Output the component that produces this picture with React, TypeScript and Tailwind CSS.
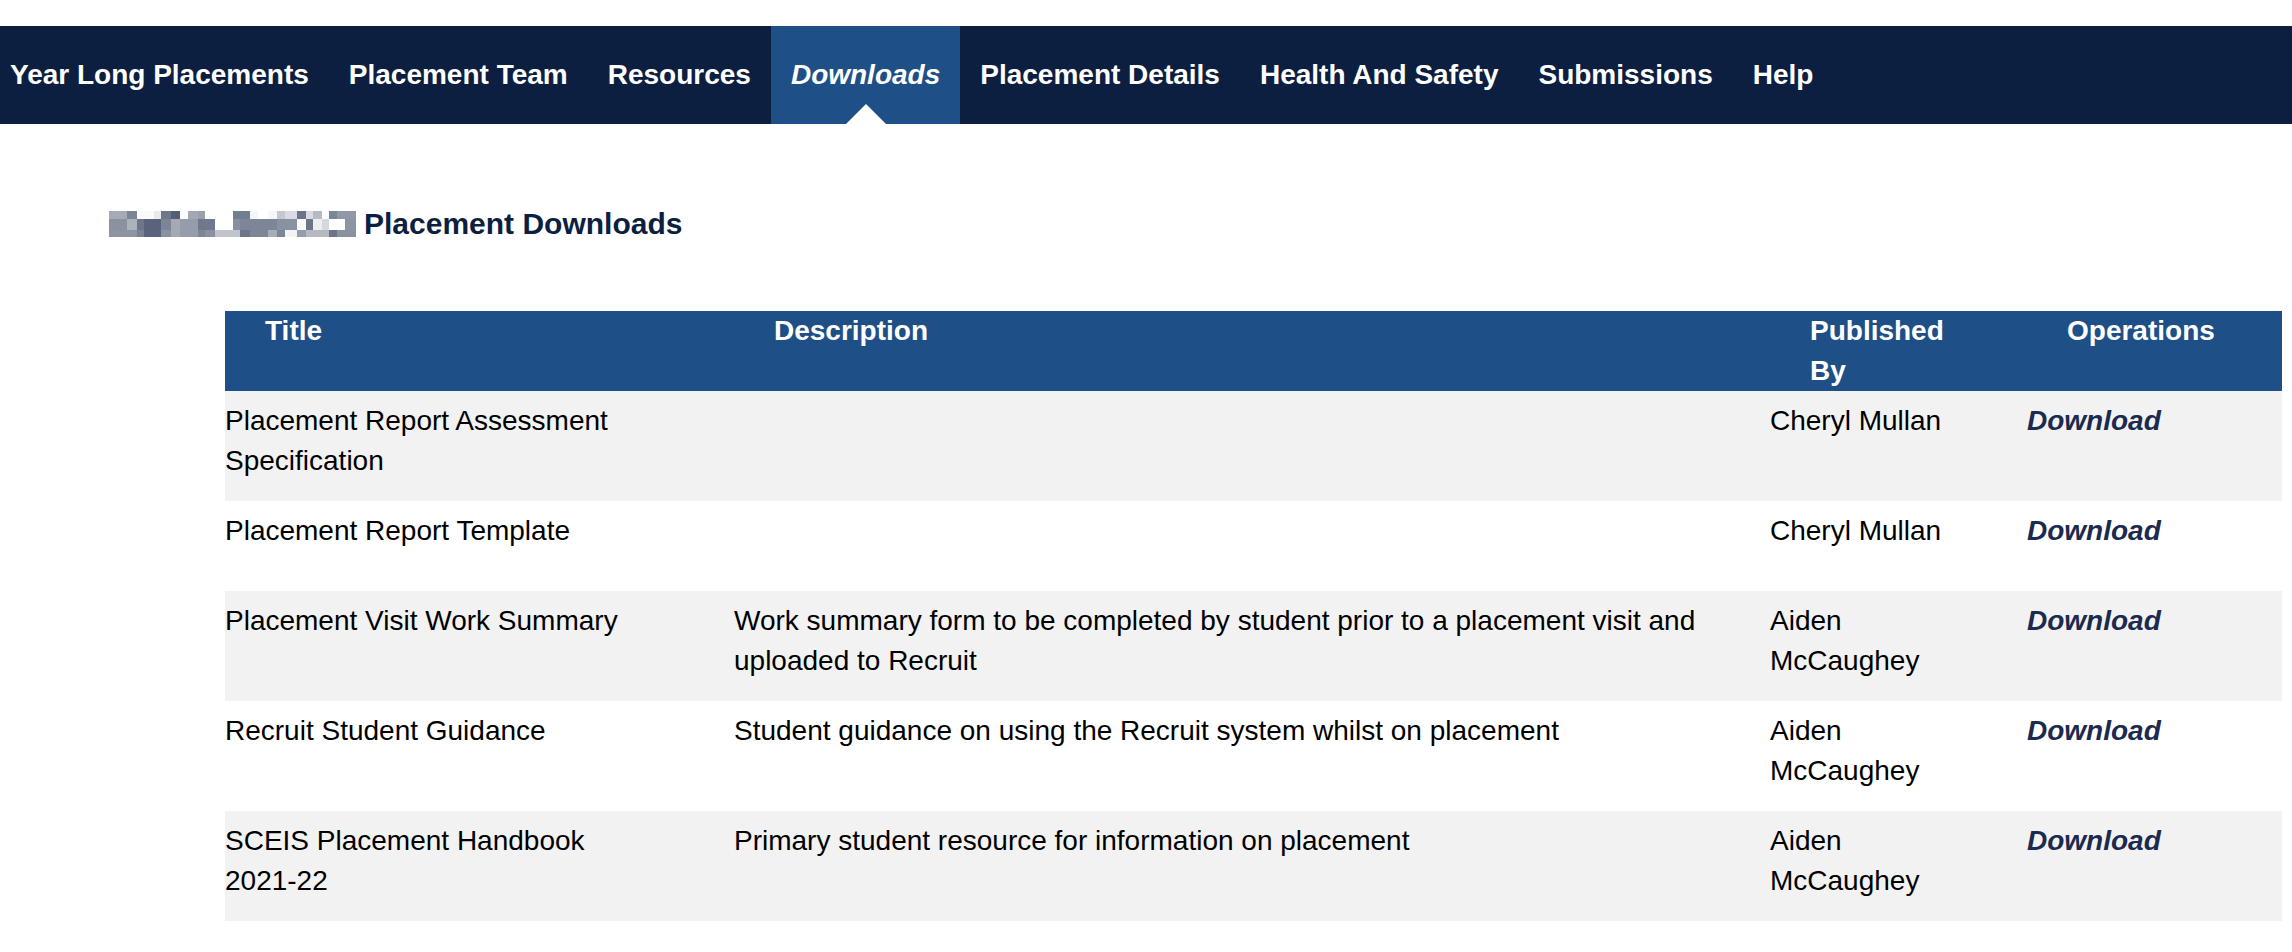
import React from 'react';

type Row = {
  title: string;
  description: string;
  publishedBy: string;
};

const NAV_ITEMS = [
  'Year Long Placements',
  'Placement Team',
  'Resources',
  'Downloads',
  'Placement Details',
  'Health And Safety',
  'Submissions',
  'Help',
];

const ROWS: Row[] = [
  { title: 'Placement Report Assessment Specification', description: '', publishedBy: 'Cheryl Mullan' },
  { title: 'Placement Report Template', description: '', publishedBy: 'Cheryl Mullan' },
  {
    title: 'Placement Visit Work Summary',
    description: 'Work summary form to be completed by student prior to a placement visit and uploaded to Recruit',
    publishedBy: 'Aiden McCaughey',
  },
  {
    title: 'Recruit Student Guidance',
    description: 'Student guidance on using the Recruit system whilst on placement',
    publishedBy: 'Aiden McCaughey',
  },
  {
    title: 'SCEIS Placement Handbook 2021-22',
    description: 'Primary student resource for information on placement',
    publishedBy: 'Aiden McCaughey',
  },
];

// column edges of the blurred (pixelated) name in front of the heading
const MOSAIC_X = [0, 18, 28, 35, 45, 52, 62, 71, 79, 89, 96, 106, 124, 131, 141, 149, 159, 168, 176, 188, 197, 204, 213, 220, 228, 236, 247];
const MOSAIC_Y = [0, 8, 19, 26];
const MOSAIC_COLORS = [
  ['#a5aab4', '#7c8598', '#fafafa', '#fafafa', '#e9eaed', '#6e778a', '#545e77', '#fdfdfd', '#a2a8b4', '#9aa1ad', '#ffffff', '#ffffff', '#737d90', '#737d90', '#f5f6f8', '#ffffff', '#f6f7f8', '#c4c8d0', '#d8dbe1', '#6b7489', '#d8dbe2', '#b5bac3', '#ffffff', '#7b8598', '#9097a5', '#9097a5'],
  ['#8a91a0', '#acb1bc', '#6d7689', '#59637b', '#59637b', '#7c8597', '#a4a9b4', '#959cab', '#959cab', '#6f788c', '#6f788c', '#ffffff', '#878fa0', '#7d8699', '#7d8699', '#7d8699', '#7d8699', '#8a92a2', '#8a92a2', '#fafafa', '#6c7589', '#eceef0', '#d5d8de', '#fefefe', '#fefefe', '#8c93a2'],
  ['#8c93a2', '#8c93a2', '#7a8396', '#59637b', '#59637b', '#8a91a0', '#a4a9b4', '#959cab', '#959cab', '#7d8699', '#8a91a0', '#c0c4cc', '#c0c4cc', '#6c7589', '#7d8699', '#7d8699', '#a8adb8', '#7d8699', '#f2f3f5', '#959cab', '#b4b9c2', '#b4b9c2', '#b4b9c2', '#6c7589', '#8a91a0', '#8a91a0'],
];

const BlurredName = () => (
  <svg width="247" height="26" viewBox="0 0 247 26" className="block shrink-0" aria-hidden="true">
    {MOSAIC_COLORS.map((row, r) =>
      row.map((color, c) => (
        <rect
          key={`${r}-${c}`}
          x={MOSAIC_X[c]}
          y={MOSAIC_Y[r]}
          width={MOSAIC_X[c + 1] - MOSAIC_X[c]}
          height={MOSAIC_Y[r + 1] - MOSAIC_Y[r]}
          fill={color}
        />
      ))
    )}
  </svg>
);

export default function App() {
  return (
    <div className="min-h-screen bg-white pt-[26px] font-['Liberation_Sans',Arial,sans-serif]">
      {/* top navigation */}
      <nav className="h-[98px] w-full bg-[#0d1f41]">
        <ul className="-ml-[10px] flex h-full">
          {NAV_ITEMS.map((item) => {
            const active = item === 'Downloads';
            return (
              <li
                key={item}
                className={`relative flex h-full items-center px-[20px] text-[28px] font-bold leading-none text-white ${active ? 'bg-[#1f4f87] italic' : ''}`}
              >
                {item}
                {active && (
                  <span className="absolute bottom-0 left-1/2 h-0 w-0 -translate-x-1/2 border-x-[20px] border-b-[20px] border-x-transparent border-b-white" />
                )}
              </li>
            );
          })}
        </ul>
      </nav>

      {/* heading */}
      <div className="mt-[80px] flex h-[40px] items-center pl-[109px]">
        <BlurredName />
        <h1 className="ml-[8px] text-[30px] font-bold leading-none text-[#0c1f40]">Placement Downloads</h1>
      </div>

      {/* downloads table */}
      <table className="mt-[67px] ml-[225px] w-[2057px] table-fixed border-collapse text-[28px] leading-[40px] text-black">
        <colgroup>
          <col className="w-[509px]" />
          <col className="w-[1036px]" />
          <col className="w-[257px]" />
          <col className="w-[255px]" />
        </colgroup>
        <thead>
          <tr className="h-[80px] bg-[#1f4f87] text-white">
            <th className="pl-[40px] pr-[50px] text-left align-top font-bold">Title</th>
            <th className="pl-[40px] pr-[50px] text-left align-top font-bold">Description</th>
            <th className="pl-[40px] pr-[50px] text-left align-top font-bold">Published By</th>
            <th className="pl-[40px] pr-[50px] text-left align-top font-bold">Operations</th>
          </tr>
        </thead>
        <tbody>
          {ROWS.map((row, i) => (
            <tr key={row.title} className={`h-[90px] ${i % 2 === 0 ? 'bg-[#f2f2f2]' : 'bg-white'}`}>
              <td className="pt-[10px] pr-[80px] pb-[20px] align-top">{row.title}</td>
              <td className="pt-[10px] pr-[40px] pb-[20px] align-top">{row.description}</td>
              <td className="pt-[10px] pr-[40px] pb-[20px] align-top">{row.publishedBy}</td>
              <td className="pt-[10px] pr-[40px] pb-[20px] align-top">
                <a href="#" className="font-bold italic text-[#1b2a4f]">
                  Download
                </a>
              </td>
            </tr>
          ))}
        </tbody>
      </table>
    </div>
  );
}
